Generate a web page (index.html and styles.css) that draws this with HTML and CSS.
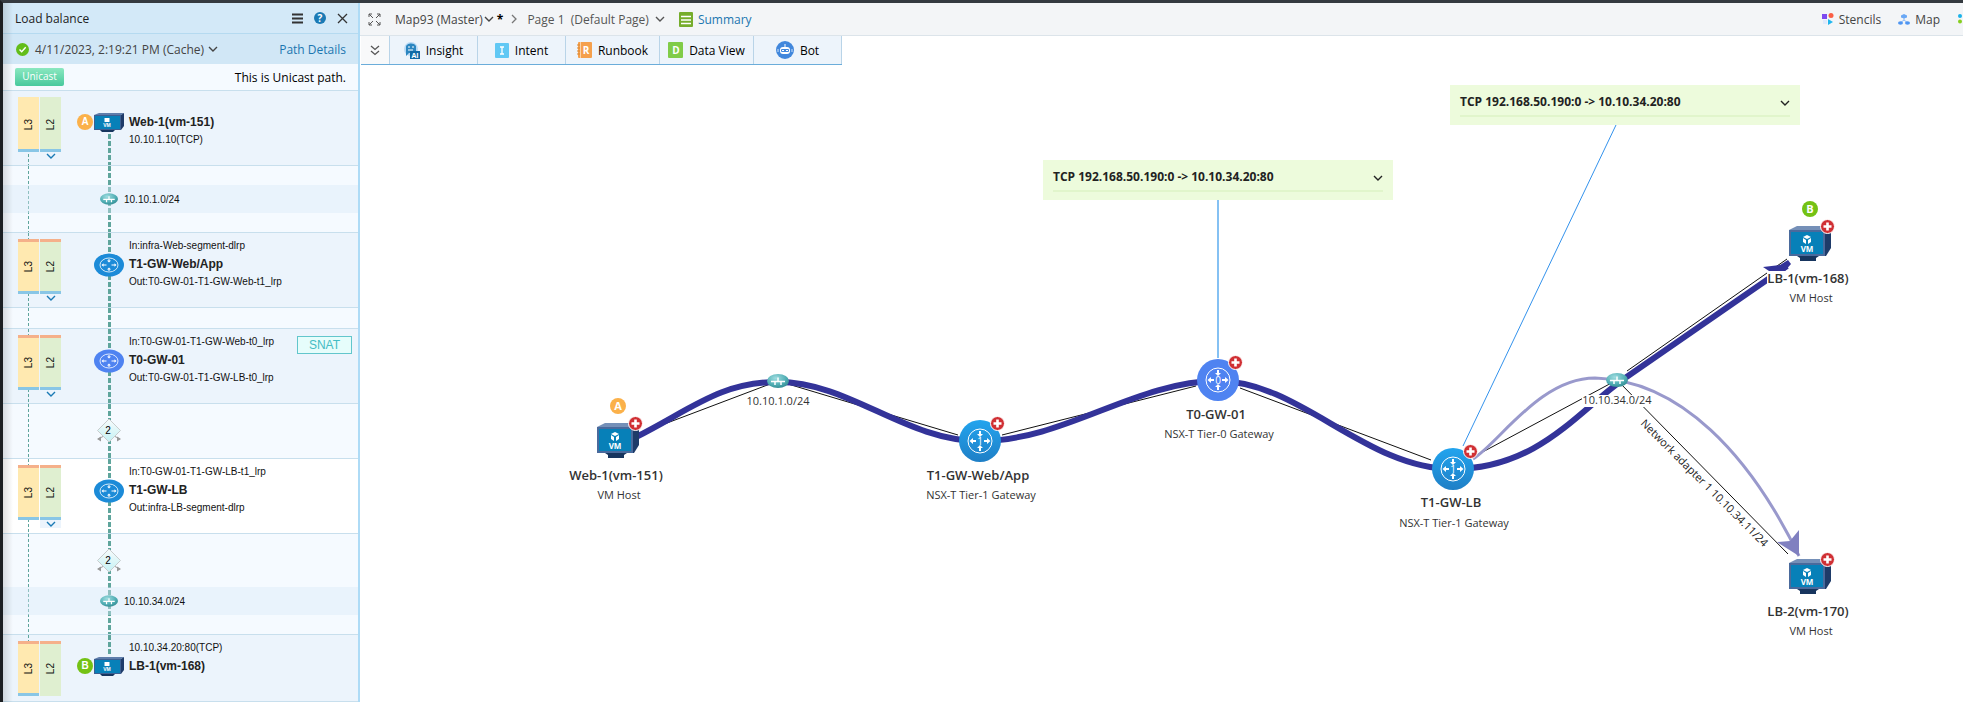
FILE: index.html
```html
<!DOCTYPE html>
<html lang="en">
<head>
    <meta charset="UTF-8">
    <meta name="viewport" content="width=device-width, initial-scale=1.0">
    <title>Load balance</title>
    <link rel="stylesheet" href="styles.css">
</head>
<body>
    <!-- shared icons -->
    <svg class="defs" width="0" height="0" aria-hidden="true">
        <defs>
            <linearGradient id="blueFill" x1="0" y1="0" x2="0" y2="1">
                <stop offset="0" stop-color="#22a4ee"/>
                <stop offset="1" stop-color="#1f7fc6"/>
            </linearGradient>
            <radialGradient id="tealFill" cx="0.4" cy="0.3" r="0.8">
                <stop offset="0" stop-color="#9fdde0"/>
                <stop offset="0.6" stop-color="#4fadb3"/>
                <stop offset="1" stop-color="#2c8289"/>
            </radialGradient>
            <linearGradient id="forkFill" x1="0" y1="0" x2="0" y2="1">
                <stop offset="0" stop-color="#f8fbfc"/>
                <stop offset="1" stop-color="#c4f1f4"/>
            </linearGradient>
        </defs>
        <symbol id="chevron" viewBox="0 0 10 6">
            <path d="M1 1l4 4 4-4" fill="none" stroke="currentColor" stroke-width="1.4"/>
        </symbol>
        <symbol id="vm" viewBox="0 0 42 36">
            <path d="M0 4l8-4h34l-6 4z" fill="#7590b8"/>
            <path d="M36 4l6-4v22l-5 8h-1z" fill="#1e3b69"/>
            <path d="M0 4h36v26H0z" fill="#4a6a9c"/>
            <path d="M2 6h32v22H2z" fill="#0780b8"/>
            <path d="M8 30h22l-3 2v3H11v-3z" fill="#17355e"/>
            <path d="M14 11l4-2 4 2-4 2zM14 12l3 2v4l-3-2zM22 12l-3 2v4l3-2z" fill="#fff"/>
        </symbol>
        <symbol id="vm-small" viewBox="0 0 30 20">
            <path d="M0 2l5-2h25l-3 2z" fill="#5f7dab"/>
            <path d="M27 2l3-2v13l-3 4z" fill="#1e3b69"/>
            <path d="M0 2h27v15H0z" fill="#3c5f92"/>
            <path d="M1 3h25v13H1z" fill="#0780b8"/>
            <path d="M6 17h15l-2 2H8z" fill="#17355e"/>
            <path d="M10.500 5h5v4h-5z" fill="#fff"/>
        </symbol>
        <symbol id="arrows" viewBox="0 0 26 26">
            <circle cx="13" cy="13" r="12" fill="none" stroke="#fff"/>
            <path d="M13 9l-3-3h2V3h2v3h2zM13 17l-3 3h2v3h2v-3h2zM2.500 13l3.500-3v2h3v2H6v2zM23.500 13l-3.500-3v2h-3v2h3v2z" fill="#fff"/>
        </symbol>
        <symbol id="router-small" viewBox="0 0 30 24">
            <ellipse cx="15" cy="12" rx="15" ry="11.500" fill="currentColor"/>
            <ellipse cx="15" cy="12" rx="9" ry="7" fill="none" stroke="#fff" stroke-width="0.8"/>
            <path d="M15 9.500l-2-2h1.500V6h1v1.500H17zM15 14.500l-2 2h1.500V18h1v-1.500H17zM7.500 12l2-1.800v1.300h3v1h-3v1.300zM22.500 12l-2-1.800v1.300h-3v1h3v1.300z" fill="#fff"/>
        </symbol>
        <symbol id="subnet" viewBox="0 0 22 14">
            <ellipse cx="11" cy="7" rx="11" ry="7" fill="url(#tealFill)"/>
            <path d="M4 7.500h14M8 7.500V11M11 7.500V3.500M14 7.500V11" fill="none" stroke="#fff" stroke-width="1.500"/>
        </symbol>
        <symbol id="plus" viewBox="0 0 15 15">
            <circle cx="7.500" cy="7.500" r="7" fill="#d03034" stroke="#fff"/>
            <path d="M7.500 3.500v8M3.500 7.500h8" stroke="#fff" stroke-width="2.600"/>
        </symbol>
        <symbol id="fork" viewBox="0 0 26 25">
            <path d="M8 18l-6 3M18 18l6 3" stroke="#999" fill="none"/>
            <path d="M5 18.500L1 21l4 2.500zM21 18.500l4 2.500-4 2.500z" fill="#999"/>
            <path d="M13 1l11.500 11.500L13 24 1.500 12.500z" fill="url(#forkFill)" stroke="#c8cccd"/>
        </symbol>
    </svg>

    <div class="app">
        <aside class="panel">
            <div class="panel-head">
                <h1>Load balance</h1>
                <button aria-label="Menu"><svg width="11" height="11"><path d="M0 1.500h11M0 5.500h11M0 9.500h11" stroke="#333" stroke-width="2"/></svg></button>
                <button class="help" aria-label="Help">?</button>
                <button aria-label="Close"><svg width="11" height="11"><path d="M1 1l9 9M10 1l-9 9" stroke="#333" stroke-width="1.300"/></svg></button>
            </div>
            <div class="panel-date">
                <svg width="13" height="13"><circle cx="6.500" cy="6.500" r="6.500" fill="#62bd19"/><path d="M3.500 6.500l2.200 2.300 4-4.500" fill="none" stroke="#fff" stroke-width="1.400"/></svg>
                <button class="date-btn">4/11/2023, 2:19:21 PM (Cache) <svg width="10" height="6"><use href="#chevron"/></svg></button>
                <a href="#">Path Details</a>
            </div>
            <div class="panel-type">
                <span class="tag">Unicast</span>
                <span>This is Unicast path.</span>
            </div>

            <ol class="path">
                <li class="hop first">
                    <div class="bars">
                        <div class="bar l3"><span>L3</span></div>
                        <div class="bar l2"><span>L2</span></div>
                        <button class="more" aria-label="Expand"><svg width="10" height="6"><use href="#chevron"/></svg></button>
                    </div>
                    <span class="mark mark-a">A</span>
                    <svg class="dev" width="30" height="20"><use href="#vm-small"/><text class="vm-text-small" x="13" y="14">VM</text></svg>
                    <div class="info"><p></p><h2>Web-1(vm-151)</h2><p>10.10.1.10(TCP)</p></div>
                </li>
                <li class="link">
                    <div class="subnet"><svg width="18" height="12"><use href="#subnet"/></svg>10.10.1.0/24</div>
                </li>
                <li class="hop">
                    <div class="bars">
                        <div class="bar l3"><span>L3</span></div>
                        <div class="bar l2"><span>L2</span></div>
                        <button class="more" aria-label="Expand"><svg width="10" height="6"><use href="#chevron"/></svg></button>
                    </div>
                    <span class="mark"></span>
                    <svg class="dev tier1" width="30" height="24"><use href="#router-small"/></svg>
                    <div class="info"><p>In:infra-Web-segment-dlrp</p><h2>T1-GW-Web/App</h2><p>Out:T0-GW-01-T1-GW-Web-t1_lrp</p></div>
                </li>
                <li class="link empty"></li>
                <li class="hop">
                    <div class="bars">
                        <div class="bar l3"><span>L3</span></div>
                        <div class="bar l2"><span>L2</span></div>
                        <button class="more" aria-label="Expand"><svg width="10" height="6"><use href="#chevron"/></svg></button>
                    </div>
                    <span class="mark"></span>
                    <svg class="dev tier0" width="30" height="24"><use href="#router-small"/></svg>
                    <div class="info"><p>In:T0-GW-01-T1-GW-Web-t0_lrp</p><h2>T0-GW-01</h2><p>Out:T0-GW-01-T1-GW-LB-t0_lrp</p></div>
                    <span class="snat">SNAT</span>
                </li>
                <li class="link">
                    <div class="fork"><svg width="26" height="25"><use href="#fork"/><text class="fork-text" x="12" y="16">2</text></svg></div>
                </li>
                <li class="hop current">
                    <div class="bars">
                        <div class="bar l3"><span>L3</span></div>
                        <div class="bar l2"><span>L2</span></div>
                        <button class="more" aria-label="Expand"><svg width="10" height="6"><use href="#chevron"/></svg></button>
                    </div>
                    <span class="mark"></span>
                    <svg class="dev tier1" width="30" height="24"><use href="#router-small"/></svg>
                    <div class="info"><p>In:T0-GW-01-T1-GW-LB-t1_lrp</p><h2>T1-GW-LB</h2><p>Out:infra-LB-segment-dlrp</p></div>
                </li>
                <li class="link">
                    <div class="fork"><svg width="26" height="25"><use href="#fork"/><text class="fork-text" x="12" y="16">2</text></svg></div>
                    <div class="subnet"><svg width="18" height="12"><use href="#subnet"/></svg>10.10.34.0/24</div>
                </li>
                <li class="hop last">
                    <div class="bars">
                        <div class="bar l3"><span>L3</span></div>
                        <div class="bar l2"><span>L2</span></div>
                    </div>
                    <span class="mark mark-b">B</span>
                    <svg class="dev" width="30" height="20"><use href="#vm-small"/><text class="vm-text-small" x="13" y="14">VM</text></svg>
                    <div class="info"><p>10.10.34.20:80(TCP)</p><h2>LB-1(vm-168)</h2></div>
                </li>
            </ol>
        </aside>

        <main class="main">
            <header class="topbar">
                <button aria-label="Full screen"><svg width="13" height="13"><path d="M1 4V1h3M9 1h3v3M12 9v3H9M4 12H1V9M1 1l4 4M12 1L8 5M12 12L8 8M1 12l4-4" fill="none" stroke="#555"/></svg></button>
                <button class="map-name">Map93 (Master) <svg width="10" height="6"><use href="#chevron"/></svg></button>
                <b class="star">*</b>
                <svg class="sep" width="6" height="10"><path d="M1 1l4 4-4 4" fill="none" stroke="#777" stroke-width="1.300"/></svg>
                <button class="page-name">Page 1 &nbsp;(Default Page) <svg width="10" height="6"><use href="#chevron"/></svg></button>
                <a class="summary" href="#"><svg width="14" height="15"><rect width="14" height="15" rx="1" fill="#76ad2c"/><path d="M2 4.500h10M2 8h10M2 11.500h10" stroke="#fff" stroke-width="1.300"/></svg>Summary</a>
                <div class="top-right">
                    <button><svg width="12" height="12"><rect y="1" width="5" height="5" fill="#7d4bf0"/><circle cx="9" cy="2.500" r="2.500" fill="#fb5f45"/><path d="M6 6l5 3-5 3z" fill="#1fb6ee"/><path d="M1 7h4v4H1z" fill="#dfe9fb"/></svg>Stencils</button>
                    <button><svg width="12" height="12"><path d="M6 4v3M6 7L2 10M6 7l4 3" stroke="#8fbcf5" fill="none"/><path d="M3 2.500L6 1l3 1.500v2L6 5.500 3 4.500z" fill="#6aa8f5"/><ellipse cx="2.500" cy="10" rx="2.500" ry="1.800" fill="#4e95f2"/><ellipse cx="9.500" cy="10" rx="2.500" ry="1.800" fill="#4e95f2"/></svg>Map</button>
                    <button aria-label="More"><svg width="6" height="12"><circle cx="3" cy="3" r="2" fill="#1ab2ea"/><circle cx="3" cy="8.500" r="2" fill="#86cf1f"/></svg></button>
                </div>
            </header>

            <nav class="tabs">
                <button class="tab-fold" aria-label="Collapse"><svg width="10" height="11"><path d="M1 1l4 3.500L9 1M1 6l4 3.500L9 6" fill="none" stroke="#555" stroke-width="1.300"/></svg></button>
                <button><svg width="16" height="17"><circle cx="7" cy="7" r="7" fill="#b9daf5"/><path d="M2 5c0-4 8-5 10-1v7H5L2 14z" fill="#2c86c0"/><path d="M4 5h2M8 5h2M4 8h5" stroke="#fff"/><rect x="6" y="9" width="10" height="8" fill="#0f6aa5"/><text class="ai-text" x="11" y="16">AI</text></svg>Insight</button>
                <button><svg width="14" height="15"><rect width="14" height="15" rx="1" fill="#61c8f4"/><path d="M5 4h4M7 4v7M5 11h4" stroke="#fff" stroke-width="1.300"/></svg>Intent</button>
                <button><svg width="15" height="16"><rect x="1" width="14" height="16" rx="1" fill="#f5a04c"/><path d="M3.500 0v16" stroke="#fbd2a4"/><path d="M0 3h3M0 6h3M0 9h3M0 12h3" stroke="#d98735"/><text class="tab-letter" x="9" y="12">R</text></svg>Runbook</button>
                <button><svg width="15" height="16"><rect width="15" height="16" rx="1" fill="#80cc49"/><text class="tab-letter" x="8" y="12">D</text></svg>Data View</button>
                <button><svg width="18" height="18"><circle cx="9" cy="9" r="9" fill="#4187dc"/><path d="M9 3v3" stroke="#fff"/><rect x="4" y="6" width="10" height="7" rx="3" fill="#fff"/><path d="M2 8v3M16 8v3" stroke="#cfe2fa"/><rect x="5" y="8" width="8" height="3" rx="1" fill="#4187dc"/><path d="M6 9.500h2M10 9.500h2" stroke="#fff"/></svg>Bot</button>
            </nav>

            <div class="canvas">
                <svg class="map" width="100%" height="100%">
                    <g transform="translate(-360 -65)">
                        <!-- physical links -->
                        <g class="wire">
                            <path d="M638 434L778 381L958 435M1002 435L1196 386M1240 388L1431 460M1477 455L1617 380M1627 371L1787 259M1617 380L1788 554"/>
                        </g>
                        <!-- paths -->
                        <path class="path-thin" d="M1473 459C1500 442 1540 378 1595 378C1680 380 1750 455 1799 556"/>
                        <path class="arrow-thin" d="M1799 556L1777 542L1790 541L1799 530z"/>
                        <path class="path-thick" d="M636 437C690 410 720 382 778 382C850 382 905 441 980 441C1065 441 1135 381 1218 381C1300 381 1365 469 1453 469C1540 469 1580 408 1628 376L1787 266"/>
                        <path class="arrow-thick" d="M1763 267L1780 265L1788 260L1791 264L1784 272L1775 275z"/>
                        <!-- note pointers -->
                        <path class="note-line-wide" d="M1218 200V358"/>
                        <path class="note-line" d="M1616 125L1463 446"/>

                        <g class="node">
                            <use href="#vm" x="597" y="423" width="42" height="36"/>
                            <text class="vm-text" x="615" y="449">VM</text>
                            <use href="#plus" x="628" y="416" width="15" height="15"/>
                            <circle cx="618" cy="406" r="8" fill="#fbb14a"/>
                            <text class="mark-text" x="618" y="410">A</text>
                            <text class="name" x="616" y="480">Web-1(vm-151)</text>
                            <text class="kind" x="619" y="499">VM Host</text>
                        </g>
                        <g class="node">
                            <use href="#subnet" x="767" y="374" width="22" height="14"/>
                            <text class="kind" x="778" y="405">10.10.1.0/24</text>
                        </g>
                        <g class="node">
                            <circle cx="980" cy="441" r="21" fill="url(#blueFill)"/>
                            <use href="#arrows" x="967" y="428" width="26" height="26"/>
                            <text class="tier" x="980" y="445">1</text>
                            <use href="#plus" x="990" y="416" width="15" height="15"/>
                            <text class="name" x="978" y="480">T1-GW-Web/App</text>
                            <text class="kind" x="981" y="499">NSX-T Tier-1 Gateway</text>
                        </g>
                        <g class="node">
                            <circle cx="1218" cy="380" r="21" fill="#4f83f1"/>
                            <use href="#arrows" x="1205" y="367" width="26" height="26"/>
                            <text class="tier" x="1218" y="384">0</text>
                            <use href="#plus" x="1228" y="355" width="15" height="15"/>
                            <text class="name" x="1216" y="419">T0-GW-01</text>
                            <text class="kind" x="1219" y="438">NSX-T Tier-0 Gateway</text>
                        </g>
                        <g class="node">
                            <circle cx="1453" cy="469" r="21" fill="url(#blueFill)"/>
                            <use href="#arrows" x="1440" y="456" width="26" height="26"/>
                            <text class="tier" x="1453" y="473">1</text>
                            <use href="#plus" x="1463" y="444" width="15" height="15"/>
                            <text class="name" x="1451" y="507">T1-GW-LB</text>
                            <text class="kind" x="1454" y="527">NSX-T Tier-1 Gateway</text>
                        </g>
                        <g class="node">
                            <use href="#subnet" x="1606" y="373" width="22" height="14"/>
                            <rect class="label-bg" x="1582" y="395" width="71" height="12"/>
                            <text class="kind" x="1617" y="404">10.10.34.0/24</text>
                        </g>
                        <g class="node">
                            <use href="#vm" x="1789" y="226" width="42" height="36"/>
                            <text class="vm-text" x="1807" y="252">VM</text>
                            <use href="#plus" x="1820" y="219" width="15" height="15"/>
                            <circle cx="1810" cy="209" r="8" fill="#74c214"/>
                            <text class="mark-text" x="1810" y="213">B</text>
                            <rect class="label-bg" x="1767" y="271" width="82" height="16"/>
                            <text class="name" x="1808" y="283">LB-1(vm-168)</text>
                            <text class="kind" x="1811" y="302">VM Host</text>
                        </g>
                        <g class="node">
                            <use href="#vm" x="1789" y="559" width="42" height="36"/>
                            <text class="vm-text" x="1807" y="585">VM</text>
                            <use href="#plus" x="1820" y="552" width="15" height="15"/>
                            <text class="name" x="1808" y="616">LB-2(vm-170)</text>
                            <text class="kind" x="1811" y="635">VM Host</text>
                        </g>
                        <text class="port" transform="translate(1640 424) rotate(45)">Network adapter 1 10.10.34.11/24</text>
                    </g>
                </svg>

                <section class="note note-t0">
                    <div class="note-head">TCP 192.168.50.190:0 -&gt; 10.10.34.20:80 <button aria-label="Expand"><svg width="10" height="6"><use href="#chevron"/></svg></button></div>
                </section>
                <section class="note note-lb">
                    <div class="note-head">TCP 192.168.50.190:0 -&gt; 10.10.34.20:80 <button aria-label="Expand"><svg width="10" height="6"><use href="#chevron"/></svg></button></div>
                </section>
            </div>
        </main>
    </div>
</body>
</html>
```
FILE: styles.css
```css
*{
    margin: 0;
    padding: 0;
    box-sizing: border-box;
}
body{
    height: 100vh;
    overflow: hidden;
    background: #fff;
    font-family: "Open Sans", "Noto Sans", sans-serif;
    font-size: 12px;
    color: #222;
}
button{
    border: none;
    background: none;
    font: inherit;
    color: inherit;
    display: flex;
    align-items: center;
    cursor: pointer;
}
a{
    color: #1b76b0;
    text-decoration: none;
}
ol{
    list-style: none;
}
.defs{
    position: absolute;
}
.app{
    display: flex;
    height: 100%;
    border-top: 3px solid #343a40;
    border-left: 3px solid #1c1f22;
}

/* left panel */
.panel{
    position: relative;
    flex: 0 0 357px;
    display: flex;
    flex-direction: column;
    background: #f5faff;
    border-right: 2px solid #aedbf6;
}
.panel::before{
    content: "";
    position: absolute;
    left: 0;
    top: 0;
    bottom: 0;
    width: 10px;
    background: linear-gradient(to right, rgba(0,0,0,0.12), rgba(0,0,0,0));
    pointer-events: none;
}
.panel-head{
    height: 31px;
    display: flex;
    align-items: center;
    gap: 11px;
    padding: 0 10px 0 12px;
    background: #d3e9f8;
    border-bottom: 1px solid #b5daf0;
}
.panel-head h1{
    flex: 1;
    font-size: 12px;
    font-weight: 400;
}
.panel-head .help{
    width: 12px;
    height: 12px;
    justify-content: center;
    border-radius: 50%;
    background: #1a7ab5;
    color: #fff;
    font-size: 10px;
    font-weight: 700;
}
.panel-date{
    height: 30px;
    display: flex;
    align-items: center;
    gap: 6px;
    padding: 0 12px 0 13px;
    background: #d1e7f6;
}
.date-btn{
    gap: 4px;
    color: #444;
}
.panel-date a{
    margin-left: auto;
}
.panel-type{
    height: 26px;
    display: flex;
    align-items: center;
    justify-content: space-between;
    padding: 0 12px;
    color: #000;
}
.tag{
    width: 49px;
    height: 18px;
    line-height: 17px;
    border-radius: 2px;
    background: linear-gradient(#8be8c0, #48c99d);
    color: #fff;
    font-size: 10px;
    text-align: center;
}

/* hops */
.path{
    font-family: "Liberation Sans", Arial, sans-serif;
    font-size: 10px;
    color: #111;
}
.path li{
    border-top: 1px solid #c8dfed;
    background-image: repeating-linear-gradient(#5fa59c 0 5px, transparent 5px 7px), repeating-linear-gradient(#5fa59c 0 3px, transparent 3px 5px);
    background-size: 3px 100%, 1px 100%;
    background-position: 105px 0, 25px 0;
    background-repeat: no-repeat;
}
.link{
    display: flow-root;
    min-height: 55px;
}
.hop{
    height: 75px;
    display: flex;
    align-items: flex-start;
    background-color: #ecf4fc;
}
.path .first{
    background-position: 105px 43px, 25px 43px;
}
.path .last{
    height: 68px;
    background-size: 3px 20px, 1px 10px;
    border-bottom: 1px solid #c8dfed;
}
.path .current{
    background-color: #fff;
}
.bars{
    display: grid;
    grid-template-columns: 21px 21px;
    column-gap: 1px;
    margin: 6px 0 0 15px;
}
.bar{
    height: 55px;
    display: flex;
    align-items: center;
    justify-content: center;
    border-top: 3px solid #f5b08a;
    border-bottom: 3px solid #89c6e6;
}
.bar span{
    writing-mode: vertical-rl;
    transform: rotate(180deg);
}
.l3{
    background: #ffe9b0;
}
.l2{
    background: #dfefd0;
}
.first .l3{
    border-top-color: #ffe9b0;
}
.first .l2{
    border-top-color: #dfefd0;
}
.last .l2{
    border-bottom-color: #dfefd0;
}
.more{
    grid-column: 2;
    height: 8px;
    justify-content: center;
    background: #ecf4fc;
    color: #1a7ab5;
}
.mark{
    width: 16px;
    height: 16px;
    margin: 23px 1px 0 16px;
    border-radius: 50%;
    color: #fff;
    font-size: 10px;
    font-weight: 700;
    line-height: 16px;
    text-align: center;
}
.mark-a{
    background: #fbb14a;
}
.mark-b{
    background: #74c214;
}
.dev{
    margin-top: 20px;
}
.first .dev, .last .dev{
    margin-top: 22px;
}
.tier1{
    color: #1c8bd8;
}
.tier0{
    color: #4f83f1;
}
.info{
    flex: 1;
    padding: 4px 0 0 5px;
}
.info p, .info h2{
    height: 18px;
    line-height: 18px;
    white-space: nowrap;
}
.info h2{
    font-size: 12px;
    color: #222;
}
.snat{
    width: 55px;
    height: 18px;
    margin: 7px 6px 0 0;
    border: 1px solid #62c6cc;
    background: #e6fdfb;
    color: #45bcc4;
    font-size: 12px;
    line-height: 17px;
    text-align: center;
}
.subnet{
    display: flex;
    align-items: center;
    gap: 6px;
    height: 28px;
    margin: 19px 0;
    padding-left: 97px;
    background: rgba(214,232,248,0.4);
}
.fork{
    height: 53px;
    padding: 14px 0 0 93px;
}
.fork + .subnet{
    margin-top: 0;
}
.empty{
    min-height: 21px;
}
.fork-text{
    font: 10px "Liberation Sans", Arial, sans-serif;
    text-anchor: middle;
}

/* top bar */
.main{
    flex: 1;
    min-width: 0;
    display: flex;
    flex-direction: column;
}
.topbar{
    height: 33px;
    display: flex;
    align-items: center;
    padding-left: 8px;
    background: #f3f5f7;
    border-bottom: 1px solid #dce4ea;
    color: #444;
}
.map-name{
    gap: 1px;
    margin-left: 14px;
}
.star{
    margin: 0 8px 0 3px;
    color: #000;
}
.page-name{
    gap: 6px;
    margin-left: 10px;
    color: #555;
}
.summary{
    display: flex;
    align-items: center;
    gap: 5px;
    margin-left: 14px;
}
.top-right{
    display: flex;
    gap: 17px;
    margin-left: auto;
}
.top-right button{
    gap: 5px;
}
.tabs{
    display: flex;
    align-self: flex-start;
    height: 29px;
    margin-left: 1px;
    border-bottom: 1px solid #6badda;
    color: #000;
}
.tabs button{
    width: 88px;
    justify-content: center;
    gap: 6px;
    background: #edf4fb;
    border-right: 1px solid #b9d4e8;
}
.tabs button:nth-child(4), .tabs button:nth-child(5){
    width: 94px;
}
.tabs .tab-fold{
    width: 29px;
    background: #f8f9fa;
}
.tab-letter{
    font-size: 10px;
    font-weight: 700;
    fill: #fff;
    text-anchor: middle;
}
.ai-text{
    font-size: 7px;
    font-weight: 700;
    fill: #fff;
    text-anchor: middle;
}

/* map */
.canvas{
    position: relative;
    flex: 1;
    min-height: 0;
}
.map{
    display: block;
}
.wire{
    fill: none;
    stroke: #111;
}
.path-thick{
    fill: none;
    stroke: #333399;
    stroke-width: 6;
}
.arrow-thick{
    fill: #333399;
}
.path-thin{
    fill: none;
    stroke: #9999cc;
    stroke-width: 3;
}
.arrow-thin{
    fill: #8080c0;
}
.note-line{
    stroke: #3392ec;
}
.note-line-wide{
    stroke: #85c1f3;
    stroke-width: 2;
}
.node text{
    text-anchor: middle;
}
.name{
    font-size: 13px;
    font-weight: 600;
    fill: #333;
}
.kind{
    font-size: 11px;
    fill: #333;
}
.port{
    font-size: 11px;
    fill: #222;
}
.tier{
    font-size: 10px;
    fill: #fff;
}
.mark-text{
    font-size: 11px;
    font-weight: 700;
    fill: #fff;
}
.vm-text{
    font-size: 8px;
    font-weight: 700;
    fill: #fff;
}
.vm-text-small{
    font-size: 5px;
    font-weight: 700;
    fill: #fff;
    text-anchor: middle;
}
.label-bg{
    fill: #fff;
}
.note{
    position: absolute;
    width: 350px;
    height: 40px;
    padding: 5px 10px;
    background: #edfbdc;
}
.note-t0{
    left: 683px;
    top: 95px;
}
.note-lb{
    left: 1090px;
    top: 20px;
}
.note-head{
    display: flex;
    justify-content: space-between;
    height: 27px;
    line-height: 24px;
    border-bottom: 2px solid #e1f5cb;
    font-weight: 700;
}
```
